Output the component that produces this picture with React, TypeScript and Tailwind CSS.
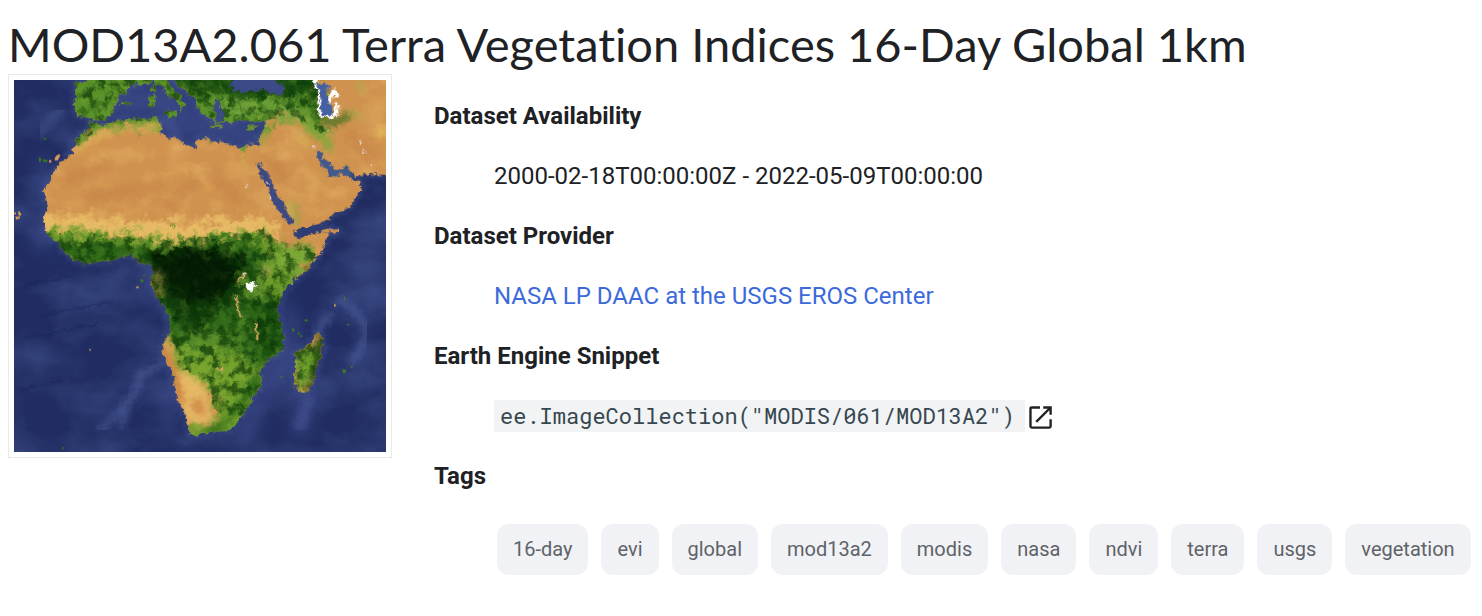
import React from "react";

const tags = ["16-day", "evi", "global", "mod13a2", "modis", "nasa", "ndvi", "terra", "usgs", "vegetation"];

const mainland =
  "M272 158 L262 182 L228 205 L220 240 L205 260 L180 280 L160 308 L145 335 L132 365 L142 400 L130 455 L137 482 L152 502 L175 520 L187 540 L215 565 L250 580 L325 575 L365 558 L395 556 L412 574 L450 584 L460 600 L453 642 L470 682 L490 705 L505 745 L511 790 L495 808 L487 840 L496 872 L516 905 L526 945 L531 985 L550 1022 L565 1062 L570 1092 L600 1096 L640 1086 L690 1079 L715 1055 L745 1010 L757 978 L785 950 L782 895 L792 884 L815 865 L842 845 L851 828 L849 790 L841 750 L832 715 L840 690 L852 665 L882 630 L922 602 L950 566 L966 540 L978 512 L984 488 L1016 486 L1014 478 L980 480 L930 494 L890 504 L880 490 L890 480 L960 460 L985 448 L1000 430 L1050 412 L1062 385 L1088 350 L1080 338 L1050 325 L1046 300 L1070 318 L1110 312 L1170 316 L1170 20 L510 20 L530 42 L560 66 L586 84 L592 112 L612 135 L634 148 L650 158 L695 156 L735 148 L775 155 L795 152 L790 182 L772 222 L745 226 L722 234 L700 225 L640 215 L612 202 L590 210 L586 238 L562 225 L532 206 L497 202 L478 184 L486 164 L466 140 L440 148 L400 144 L350 152 L312 166 Z";
const iberia =
  "M228 35 L262 32 L300 20 L470 20 L440 42 L385 44 L382 66 L358 78 L342 102 L338 126 L310 150 L285 150 L266 143 L232 140 L224 100 Z";
const italy = "M462 20 L500 20 L512 50 L542 78 L554 104 L542 124 L534 98 L506 78 L486 52 L468 44 Z";
const islands =
  "M490 124 L534 122 L528 142 L508 142 Z M448 78 L466 74 L464 108 L448 110 Z M456 44 L466 42 L464 68 L454 64 Z M360 102 L372 94 L396 96 L376 106 Z M742 172 L774 164 L764 178 L740 178 Z M632 162 L666 166 L664 172 L632 170 Z";
const madagascar =
  "M952 785 L968 802 L970 830 L958 870 L946 914 L932 955 L918 966 L898 964 L884 950 L882 914 L888 896 L886 850 L912 834 L934 814 L944 792 Z";
const blackSea = "M698 36 L722 20 L816 20 L822 34 L846 40 L856 60 L842 74 L812 72 L782 56 L740 68 L708 60 L690 50 Z";
const redSea =
  "M768 274 L776 284 L780 276 L786 292 L804 312 L824 350 L828 370 L852 398 L864 428 L878 452 L874 464 L862 456 L848 438 L826 410 L812 388 L804 356 L786 330 L776 300 Z";
const persianGulf =
  "M946 244 L964 246 L970 266 L990 282 L1002 296 L1022 300 L1036 292 L1044 288 L1052 308 L1064 326 L1046 318 L1022 310 L1004 322 L986 320 L988 306 L968 292 L958 274 Z";

function VegetationMap() {
  return (
    <svg
      role="img"
      aria-label="Vegetation index of Africa"
      viewBox="42 30 1116 1116"
      colorInterpolationFilters="sRGB"
      className="block aspect-square w-full"
    >
      <defs>
        <clipPath id="land">
          <path d={mainland} />
          <path d={iberia} />
          <path d={italy} />
          <path d={islands} />
          <path d={madagascar} />
        </clipPath>
        <filter id="ragged" x="0" y="0" width="100%" height="100%">
          <feTurbulence type="fractalNoise" baseFrequency="0.07" numOctaves="3" seed="4" result="n" />
          <feDisplacementMap in="SourceGraphic" in2="n" scale="22" xChannelSelector="R" yChannelSelector="G" />
        </filter>
        <filter id="patchy" x="-20%" y="-20%" width="140%" height="140%">
          <feGaussianBlur stdDeviation="9" result="b" />
          <feTurbulence type="fractalNoise" baseFrequency="0.035" numOctaves="5" seed="9" result="n" />
          <feDisplacementMap in="b" in2="n" scale="85" xChannelSelector="R" yChannelSelector="G" />
        </filter>
        <filter id="soft" x="-40%" y="-40%" width="180%" height="180%">
          <feGaussianBlur stdDeviation="9" />
        </filter>
        <filter id="haze" x="-40%" y="-40%" width="180%" height="180%">
          <feGaussianBlur stdDeviation="22" />
        </filter>
        <filter id="darkGrain" x="0" y="0" width="100%" height="100%">
          <feTurbulence type="fractalNoise" baseFrequency="0.035" numOctaves="5" seed="12" />
          <feColorMatrix values="0 0 0 0 0.04  0 0 0 0 0.22  0 0 0 0 0.03  4 0 0 0 -1.75" />
        </filter>
        <filter id="lightGrain" x="0" y="0" width="100%" height="100%">
          <feTurbulence type="fractalNoise" baseFrequency="0.03" numOctaves="5" seed="31" />
          <feColorMatrix values="0 0 0 0 0.46  0 0 0 0 0.64  0 0 0 0 0.2  3.4 0 0 0 -1.7" />
        </filter>
        <filter id="sandGrain" x="0" y="0" width="100%" height="100%">
          <feTurbulence type="fractalNoise" baseFrequency="0.012 0.018" numOctaves="4" seed="21" />
          <feColorMatrix values="0 0 0 0 0.88  0 0 0 0 0.67  0 0 0 0 0.38  0 1.8 0 0 -0.82" />
        </filter>
        <filter id="seaGrain" x="0" y="0" width="100%" height="100%">
          <feTurbulence type="fractalNoise" baseFrequency="0.005 0.008" numOctaves="5" seed="7" />
          <feColorMatrix values="0 0 0 0 0.24  0 0 0 0 0.3  0 0 0 0 0.53  0 1.6 0 0 -0.6" />
        </filter>
        <clipPath id="greenBelt">
          <path d="M120 484 L300 490 L500 508 L588 500 L690 496 L790 476 L830 510 L930 528 L950 560 L900 640 L870 850 L760 1010 L690 1060 L640 1010 L620 930 L530 890 L505 780 L440 590 L120 600 Z" />
          <path d="M220 20 L950 20 L955 110 L980 180 L960 190 L870 130 L800 150 L580 170 L470 145 L300 165 L230 230 L210 210 L240 160 Z" />
          <path d={madagascar} />
        </clipPath>
      </defs>

      <rect x="42" y="30" width="1116" height="1116" fill="#212d62" />
      <rect x="42" y="30" width="1116" height="1116" filter="url(#seaGrain)" />
      <g filter="url(#haze)" fill="#3c4a8a" opacity="0.75">
        <path d="M340 80 L480 40 L600 110 L780 160 L770 220 L640 210 L520 200 L460 130 L330 150 Z" />
        <ellipse cx="130" cy="330" rx="18" ry="80" />
        <ellipse cx="125" cy="500" rx="28" ry="40" />
        <ellipse cx="440" cy="620" rx="24" ry="60" />
        <ellipse cx="510" cy="990" rx="18" ry="110" />
        <path d="M850 660 L900 770 L880 920 L790 1000 L760 1120 L700 1110 L800 890 L855 840 Z" />
        <path d="M895 980 L950 970 L920 1100 L870 1090 Z" />
      </g>
      <g filter="url(#ragged)" fill="none" stroke="#5262a0" strokeLinecap="round" opacity="0.55">
        <path filter="url(#soft)" strokeWidth="22" d="M490 878 L420 915 L412 960 L370 1010 L305 1080 M380 1020 L366 1065" />
        <path filter="url(#soft)" strokeWidth="22" d="M1015 690 L1050 710 L1100 765 L1090 825 L1055 875 M985 740 L950 785" />
        <path filter="url(#soft)" strokeWidth="34" d="M925 990 L900 1070 M180 120 L120 190 M500 150 L530 195" opacity="0.7" />
      </g>
      <g fill="none" stroke="#172354" strokeWidth="5" opacity="0.35" filter="url(#ragged)">
        <path d="M60 655 L220 615 M70 642 L170 630 M110 740 L340 695 M70 805 L300 760 M60 960 L190 930" />
      </g>

      <g filter="url(#ragged)">
        <path d={`${mainland} ${iberia} ${madagascar}`} fill="none" stroke="#5064a3" strokeWidth="14" opacity="0.5" filter="url(#soft)" />
        <g clipPath="url(#land)">
          <rect x="42" y="20" width="1130" height="1130" fill="#d0934f" />
          <rect x="42" y="20" width="1130" height="1130" filter="url(#sandGrain)" />
          <g filter="url(#patchy)">
            <path d="M100 435 L260 438 L420 455 L588 458 L740 440 L830 460 L840 520 L600 540 L100 530 Z" fill="#e8bb66" />
            <path d="M80 482 L240 480 L320 490 L420 498 L500 510 L588 504 L700 492 L775 482 L800 496 L838 530 L926 528 L935 566 L900 640 L885 680 L880 860 L800 1000 L690 1130 L560 1130 L570 1060 L650 1060 L630 930 L530 930 L505 850 L440 590 L100 610 Z" fill="#6c9b2b" />
            <path d="M150 525 L240 516 L380 526 L480 535 L660 515 L780 505 L790 570 L760 660 L860 690 L880 830 L800 900 L710 840 L560 830 L470 810 L440 590 L300 600 L150 570 Z" fill="#326a1a" />
            <path d="M620 780 L700 790 L730 830 L640 850 L560 840 L540 800 Z" fill="#568a28" />
            <path d="M440 545 L560 520 L700 545 L745 580 L720 660 L690 700 L640 740 L590 790 L530 740 L490 690 L440 640 Z" fill="#133d0d" />
            <path d="M455 560 L560 535 L690 550 L725 590 L700 650 L620 690 L560 690 L500 650 Z" fill="#051d05" />
            <path d="M760 700 L830 690 L860 830 L780 860 Z" fill="#1c5110" />
            <path d="M518 855 L590 832 L700 860 L750 880 L740 980 L690 1030 L640 960 L530 930 Z" fill="#79a52f" />
            <path d="M200 0 L960 0 L960 140 L990 200 L960 200 L905 145 L830 132 L790 190 L590 190 L440 175 L320 175 L220 225 L200 200 Z" fill="#5c922a" />
            <path d="M500 0 L960 0 L950 110 L880 76 L740 84 L640 60 L580 90 L530 60 Z" fill="#1d5212" />
            <path d="M640 92 L770 96 L900 106 L940 170 L890 150 L780 135 L650 150 Z" fill="#71a33a" />
            <path d="M830 530 L930 520 L945 560 L890 620 L830 590 Z" fill="#7eaa38" />
            <path d="M720 610 L780 625 L780 690 L730 690 Z" fill="#5f8f2c" />
          </g>
          <g filter="url(#soft)">
            <path d="M490 790 L510 800 L530 890 L590 925 L620 960 L640 1050 L590 1068 L555 1040 L525 960 L485 860 Z" fill="#e6b965" />
            <path d="M484 800 L500 820 L534 900 L555 1010 L530 1000 L484 860 Z" fill="#cb8545" />
            <path d="M575 980 L608 990 L618 1040 L580 1030 Z" fill="#cf8d4b" />
            <path d="M225 230 L290 184 L360 172 L470 156 L490 185 L380 180 L290 210 L220 260 Z" fill="#dfb55d" opacity="0.8" />
            <path d="M700 1040 L750 980 L790 930 L770 910 L730 960 L680 1050 L600 1090 L650 1090 Z" fill="#2a6516" />
            <path d="M464 610 L492 604 L480 660 L500 675 L468 670 Z" fill="#d6a653" />
            <path d="M784 600 L804 590 L810 610 L790 612 Z" fill="#e0a872" />
            <path d="M954 790 L978 810 L950 930 L932 960 L930 900 L948 830 Z" fill="#0c3d08" />
            <path d="M886 850 L936 824 L944 850 L920 950 L890 960 Z" fill="#75a531" />
            <path d="M946 110 L960 150 L1010 158 L1050 130" fill="none" stroke="#2c6b18" strokeWidth="16" />
            <path d="M898 130 L930 180 L965 190 L990 240" fill="none" stroke="#80a83a" strokeWidth="24" />
            <path d="M784 220 L798 155" stroke="#7fa838" strokeWidth="14" />
            <path d="M1080 60 L1070 35 L1090 70 M1050 125 L1090 145" stroke="#a9b24a" strokeWidth="10" fill="none" />
            <path d="M1130 195 L1160 180" stroke="#e0bb5a" strokeWidth="24" fill="none" />
            <path d="M890 190 L930 235 M862 390 L892 465" stroke="#d6b458" strokeWidth="14" />
            <path d="M880 400 L892 465" stroke="#73a137" strokeWidth="9" />
            <path d="M345 275 L400 250 M900 290 L945 330 L930 400 M1000 380 L1040 360" stroke="#e2ad62" strokeWidth="22" opacity="0.6" fill="none" />
            <path d="M190 330 L330 290 M260 380 L490 350 M500 420 L590 330 M800 250 L860 340 M630 300 L720 400 M1040 190 L1130 270" stroke="#c37f48" strokeWidth="40" opacity="0.45" fill="none" />
          </g>
          <g clipPath="url(#greenBelt)">
            <rect x="42" y="20" width="1130" height="1130" filter="url(#lightGrain)" opacity="0.4" />
            <rect x="42" y="20" width="1130" height="1130" filter="url(#darkGrain)" opacity="0.7" />
          </g>
          <path d="M460 575 L560 545 L680 560 L705 600 L690 640 L620 680 L560 680 L505 650 Z" fill="#041904" opacity="0.75" filter="url(#haze)" />
          <path d="M714 222 L744 222 L736 244 L722 244 Z M508 460 L528 466 L520 474 Z" fill="#6d9a33" />
          <path d="M727 244 L730 275 L748 310" fill="none" stroke="#c5ae4c" strokeWidth="5" />
          <path d="M736 608 L712 635 M708 675 L712 710 L724 740 M768 758 L772 808" fill="none" stroke="#dda965" strokeWidth="6" />
          <path d="M650 896 L666 892 L668 902 Z" fill="#dda965" />
        </g>
        <path d={blackSea} fill="#3c4a87" />
        <path d={redSea} fill="#3d4a82" />
        <path d={persianGulf} fill="#42598b" />
        <path d="M650 86 L664 96 L660 112 L674 130 L666 154 L648 154 L652 130 L640 112 Z" fill="#3c4a85" />
        <path d="M936 24 L958 24 L952 44 L962 80 L976 124 L1006 140 L1000 146 L964 140 L950 118 L954 74 Z" fill="#ffffff" />
        <path d="M952 44 L974 34 L988 50 L978 74 L992 106 L1000 138 L974 136 L958 118 L962 82 Z" fill="#4560a0" />
        <path d="M984 90 L994 60 L1006 58 L1004 72 L988 104 Z M1002 60 L1016 68 L1012 82 L1000 76 Z M1004 98 L1012 96 L1016 136 L1002 142 Z M734 640 L764 632 L766 650 L758 664 L740 662 Z M727 612 L736 608 L732 618 Z" fill="#ffffff" />
        <path d="M800 336 l6 4 M732 354 L746 344 M808 378 l4 10 M940 226 l5 5 M980 178 l6 4 M1080 210 l3 12 M1090 240 l8 6 M1110 280 l6 8" stroke="#e7d5d7" strokeWidth="5" />
      </g>
      <g fill="#3b7b22">
        <path d="M128 202 l14 4 l-6 4 Z M116 262 l8 2 l-2 12 l-5 -1 Z M128 267 l16 4 l-4 6 l-12 -4 Z M186 1134 l8 -5 l-2 6 l-6 4 Z" />
        <path d="M420 628 h10 v8 h-8 Z M430 614 h6 v4 h-6 Z M914 748 h8 v6 h-8 Z M876 774 l8 4 l-2 8 l-6 -4 Z M893 788 h6 v6 h-6 Z M901 795 h6 v6 h-6 Z M840 919 h8 v4 h-8 Z M1040 762 h8 v4 h-8 Z M1026 898 h12 l-2 12 h-6 Z M1052 888 h6 v6 h-6 Z M1032 680 h4 v12 h-4 Z" />
      </g>
      <g fill="#d99b5b">
        <path d="M164 264 l6 -8 l8 -4 l3 5 l-8 14 l-8 1 Z M147 270 h7 v8 h-7 Z M42 428 h6 v5 h-6 Z M54 424 h4 l6 8 l-2 5 h-6 Z M46 440 h14 v5 l-12 4 Z M409 649 h7 v5 h-7 Z M1002 702 h5 v8 h-5 Z M268 837 h5 v5 h-5 Z" />
      </g>
    </svg>
  );
}

function OpenIcon() {
  return (
    <svg viewBox="0 0 24 24" aria-hidden="true" className="size-[26px]" fill="none" stroke="currentColor" strokeWidth="2.2">
      <path d="M12 3.2H4.4Q3.2 3.2 3.2 4.4V20.6Q3.2 21.8 4.4 21.8H20.6Q21.8 21.8 21.8 20.6V14" />
      <path d="M15 3.2H21.8V10 M21.3 3.7L8.5 16.5" />
    </svg>
  );
}

export default function App() {
  return (
    <main className="bg-white px-2 pt-3.5 pb-10 font-['Roboto',sans-serif] text-2xl leading-8 text-[#202124]">
      <h1 className="font-['Google_Sans','Lato',sans-serif] text-[47px] leading-[60px] whitespace-nowrap [font-variant-ligatures:none]">
        MOD13A2.061 Terra Vegetation Indices 16-Day Global 1km
      </h1>
      <div className="flex items-start gap-[42px]">
        <div className="w-96 shrink-0 border border-[#e8e8ed] p-[5px]">
          <VegetationMap />
        </div>
        <dl className="flex min-w-0 grow flex-col gap-7 pt-[26px]">
          <dt className="font-bold">Dataset Availability</dt>
          <dd className="pl-[60px]">2000-02-18T00:00:00Z - 2022-05-09T00:00:00</dd>
          <dt className="font-bold">Dataset Provider</dt>
          <dd className="pl-[60px]">
            <a href="#provider" className="text-[#3c6adb]">NASA LP DAAC at the USGS EROS Center</a>
          </dd>
          <dt className="font-bold">Earth Engine Snippet</dt>
          <dd className="flex items-end gap-0.5 pl-[60px]">
            <code className="bg-[#f1f3f4] pr-2.5 pl-1.5 font-['Roboto_Mono','Liberation_Mono',monospace] text-[22px] leading-8 whitespace-nowrap text-[#37474f]">
              ee.ImageCollection("MODIS/061/MOD13A2")
            </code>
            <a href="#editor" aria-label="Open in Code Editor" className="pb-0.5">
              <OpenIcon />
            </a>
          </dd>
          <dt className="font-bold">Tags</dt>
          <dd className="pt-1 pl-[63px]">
            <ul className="flex gap-[13px] text-xl text-[#5f6368]">
              {tags.map((tag) => (
                <li key={tag} className="rounded-xl bg-[#f1f2f6] px-4 py-3 leading-[27px]">
                  {tag}
                </li>
              ))}
            </ul>
          </dd>
        </dl>
      </div>
    </main>
  );
}
